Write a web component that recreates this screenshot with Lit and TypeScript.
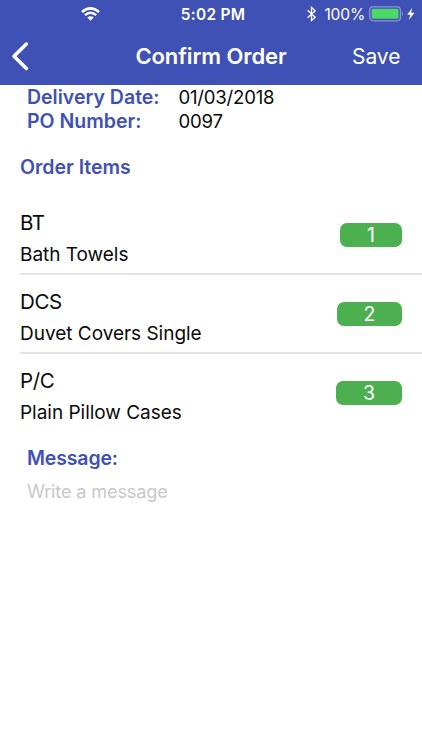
import { LitElement, html, css } from "lit";
import { customElement } from "lit/decorators.js";

interface OrderItem {
  code: string;
  name: string;
  qty: number;
  badgeWidth: number;
}

const ITEMS: OrderItem[] = [
  { code: "BT", name: "Bath Towels", qty: 1, badgeWidth: 62 },
  { code: "DCS", name: "Duvet Covers Single", qty: 2, badgeWidth: 65 },
  { code: "P/C", name: "Plain Pillow Cases", qty: 3, badgeWidth: 66 },
];

@customElement("status-bar")
class StatusBar extends LitElement {
  static styles = css`
    :host {
      display: grid;
      grid-template-columns: 1fr auto 1fr;
      align-items: center;
      height: 28px;
      font-size: 15.4px;
    }
    svg { display: block; }
    .wifi { margin-left: 81px; }
    .time { font-weight: 570; letter-spacing: 0.3px; padding-left: 4px; }
    .right { display: flex; align-items: center; justify-content: flex-end; padding-right: 6px; }
    .percent { margin: 0 4px 0 8px; font-size: 15.6px; letter-spacing: -0.2px; }
  `;
  render() {
    return html`
      <svg class="wifi" width="19" height="14" viewBox="0 0 19 14" fill="none" stroke="#fff">
        <path d="M1 4.9Q9.5-2 18 4.9" stroke-width="2.6" />
        <path d="M3.9 8.2Q9.5 3.5 15.1 8.2" stroke-width="2.4" />
        <path d="M6.3 10.6Q9.5 8 12.7 10.6L9.5 13.7Z" fill="#fff" stroke="none" />
      </svg>
      <span class="time">5:02 PM</span>
      <div class="right">
        <svg width="9" height="16" viewBox="0 0 9 16" fill="none" stroke="#fff" stroke-width="1.3">
          <path d="M.6 4.2L8.2 11.2L4.5 14.6V1.4L8.2 4.8L.6 11.8" />
        </svg>
        <span class="percent">100%</span>
        <svg width="47" height="16" viewBox="0 0 47 16">
          <rect x=".8" y=".8" width="30.6" height="14" rx="3.2" fill="none" stroke="#8c97d8" stroke-width="1.3" />
          <rect x="2.7" y="2.8" width="26.8" height="10" rx="1.2" fill="#4cd964" />
          <path d="M33 5.3Q35.2 7.8 33 10.3Z" fill="#8c97d8" />
          <path d="M43.3 1.8L38.2 8.8H41.4L39.8 14L45.5 6.8H42.1Z" fill="#fff" />
        </svg>
      </div>
    `;
  }
}

@customElement("order-row")
class OrderRow extends LitElement {
  static properties = { item: { attribute: false } };
  declare item: OrderItem;
  static styles = css`
    :host {
      display: flex;
      align-items: center;
      justify-content: space-between;
      box-sizing: border-box;
      height: 79px;
      margin-left: 20px;
      padding-right: 20px;
      border-bottom: 2px solid #e4e4e6;
    }
    :host(:last-of-type) { border-bottom-color: transparent; }
    .text { padding-top: 8px; }
    .code, .name { line-height: 32px; white-space: nowrap; }
    .code { font-size: 20.5px; letter-spacing: -0.4px; }
    .name { font-size: 19px; letter-spacing: -0.02px; }
    .badge {
      height: 24px;
      border-radius: 7px;
      background: #4caf50;
      color: #fff;
      font-size: 19.5px;
      line-height: 25px;
      text-align: center;
    }
  `;
  render() {
    const { code, name, qty, badgeWidth } = this.item;
    return html`
      <div class="text">
        <div class="code">${code}</div>
        <div class="name">${name}</div>
      </div>
      <div class="badge" style="width:${badgeWidth}px">${qty}</div>
    `;
  }
}

@customElement("app-root")
class AppRoot extends LitElement {
  static styles = css`
    :host {
      display: block;
      height: 750px;
      overflow: hidden;
      background: #fff;
      color: #0a0a0a;
      font-family: Inter, "Liberation Sans", sans-serif;
    }
    header { height: 85px; background: #3f51b5; color: #fff; overflow: hidden; }
    nav {
      display: grid;
      grid-template-columns: 1fr auto 1fr;
      align-items: center;
      height: 56px;
    }
    .back { display: block; margin-left: 11px; }
    .title { font-size: 22px; font-weight: 570; letter-spacing: -0.1px; }
    .save { justify-self: end; padding-right: 21.5px; font-size: 21px; }
    .details {
      display: grid;
      grid-template-columns: 151.5px auto;
      padding: 0 0 0 27px;
      line-height: 24px;
    }
    .label, .heading {
      color: #3f51b5;
      font-size: 19.5px;
      font-weight: 570;
      line-height: 24px;
      letter-spacing: 0;
    }
    .value { font-size: 18.6px; letter-spacing: -0.22px; }
    .heading { padding: 22px 20px 0; }
    .items { padding-top: 17px; }
    .message { padding: 13px 27px 0; letter-spacing: -0.15px; }
    .placeholder { padding: 9px 27px 0; color: #c7c7cd; font-size: 18.2px; line-height: 24px; letter-spacing: -0.18px; }
  `;
  render() {
    return html`
      <header>
        <status-bar></status-bar>
        <nav>
          <svg class="back" width="18" height="30" viewBox="0 0 18 30" fill="none" stroke="#fff" stroke-width="3.5" stroke-linecap="round" stroke-linejoin="round">
            <path d="M15.4 3L3 15.2L15.4 27.4" />
          </svg>
          <span class="title">Confirm Order</span>
          <span class="save">Save</span>
        </nav>
      </header>
      <div class="details">
        <span class="label">Delivery Date:</span><span class="value">01/03/2018</span>
        <span class="label">PO Number:</span><span class="value">0097</span>
      </div>
      <div class="heading">Order Items</div>
      <div class="items">${ITEMS.map((item) => html`<order-row .item=${item}></order-row>`)}</div>
      <div class="label message">Message:</div>
      <div class="placeholder">Write a message</div>
    `;
  }
}
